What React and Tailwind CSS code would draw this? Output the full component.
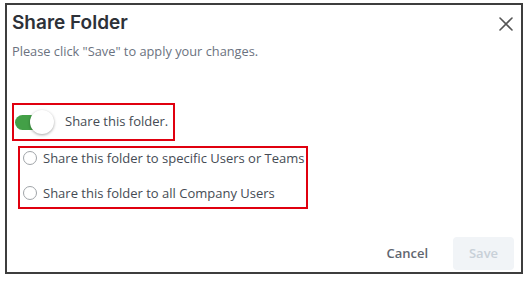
export default function App() {
  return (
    <div className="w-[528px] h-[283px] bg-white pl-[5px] pt-[3px]" style={{ fontFamily: '"Open Sans", sans-serif' }}>
      <div className="relative w-[518px] h-[271px] border-2 border-[#3d3d3d] flex flex-col">
        <div className="flex items-start justify-between pl-[5px] pr-[8px] pt-[5px]">
          <h1 className="text-[19px] leading-[26px] font-semibold text-[#2d3138]" style={{ fontFamily: 'Inter, sans-serif' }}>Share Folder</h1>
          <svg width="14" height="14" viewBox="0 0 14 14" className="mt-[7px]">
            <path d="M1 1 L13 13 M13 1 L1 13" stroke="#555" strokeWidth="1.6" strokeLinecap="round" />
          </svg>
        </div>
        <p className="pl-[5px] mt-[6px] text-[12.8px] leading-[18px] text-[#6b7280]">Please click "Save" to apply your changes.</p>
        <div className="ml-[5px] mt-[43px] w-[163px] h-[38px] border-2 border-[#e0000f] flex items-center pl-[1px]">
          <div className="relative w-[38px] h-[24px] flex items-center">
            <div className="w-[28px] h-[15px] rounded-full bg-[#43a047]" />
            <div className="absolute left-[15px] top-0 w-[24px] h-[24px] rounded-full bg-white shadow-[0_1px_3px_rgba(0,0,0,0.35)]" />
          </div>
          <span className="ml-[12px] text-[13px] text-[#454b54]">Share this folder.</span>
        </div>
        <div className="ml-[11px] mt-[5px] w-[290px] h-[63px] border-2 border-[#e0000f] flex flex-col justify-center gap-[17px] pl-[3px] pb-[4px]">
          <label className="flex items-center gap-[6px] text-[13px] leading-[18px] text-[#454b54]">
            <span className="w-[14px] h-[14px] rounded-full border border-[#a0a4a8] bg-white" />
            Share this folder to specific Users or Teams
          </label>
          <label className="flex items-center gap-[6px] text-[13px] leading-[18px] text-[#454b54]">
            <span className="w-[14px] h-[14px] rounded-full border border-[#a0a4a8] bg-white" />
            Share this folder to all Company Users
          </label>
        </div>
        <div className="mt-auto flex items-center justify-end gap-[25px] pr-[7px] pb-[2px]">
          <button className="text-[13px] font-semibold text-[#5f6670]">Cancel</button>
          <button className="w-[61px] h-[33px] rounded-[4px] bg-[#f1f4f7] text-[13px] font-semibold text-[#c8d0d8]">Save</button>
        </div>
      </div>
    </div>
  );
}
